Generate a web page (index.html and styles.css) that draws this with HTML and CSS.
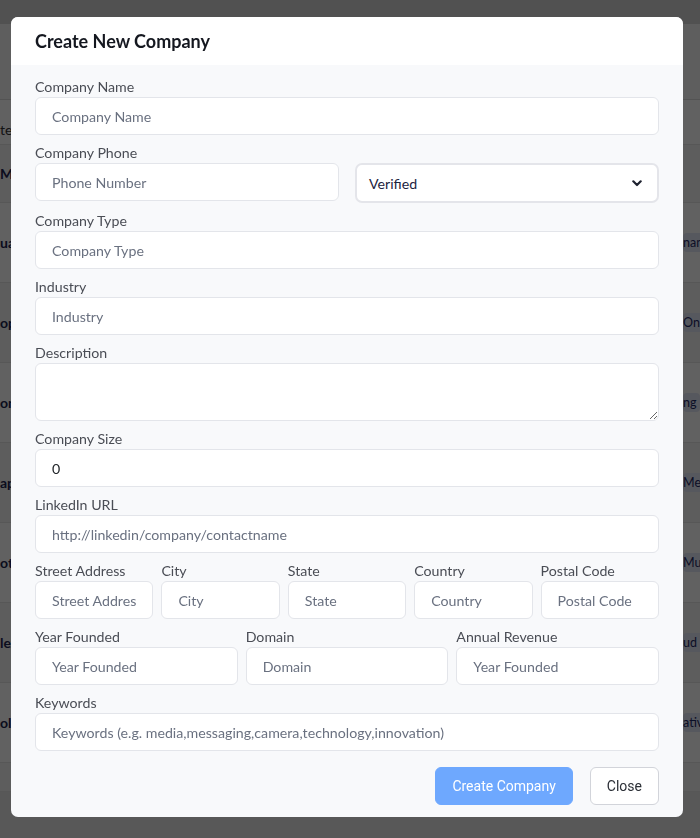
FILE: index.html
```html
<!DOCTYPE html>
<html lang="en">
<head>
<meta charset="utf-8">
<title>Create New Company</title>
<link rel="stylesheet" href="styles.css">
</head>
<body>
<div class="page">
  <div class="topbar"></div>
  <div class="toolbar"></div>
  <div class="table">
    <div class="trow thead1"><span class="lcell">tes</span><span class="rcell"></span></div>
    <div class="trow thead2"><span class="lcell strong">Main</span><span class="rcell"></span></div>
    <div class="trow"><span class="lcell strong">uantum</span><span class="rcell"><span class="badge">nance</span></span></div>
    <div class="trow"><span class="lcell strong">ops</span><span class="rcell"><span class="badge">Online</span></span></div>
    <div class="trow"><span class="lcell strong">onyx</span><span class="rcell"><span class="badge">ng</span></span></div>
    <div class="trow"><span class="lcell strong">apex</span><span class="rcell"><span class="badge">Media</span></span></div>
    <div class="trow"><span class="lcell strong">otify</span><span class="rcell"><span class="badge">Music</span></span></div>
    <div class="trow"><span class="lcell strong">lex</span><span class="rcell"><span class="badge">ud Computing</span></span></div>
    <div class="trow"><span class="lcell strong">olby</span><span class="rcell"><span class="badge">ative</span></span></div>
    <div class="trow tlast"></div>
  </div>
</div>

<div class="backdrop">
  <div class="modal">
    <div class="modal-header">
      <h2 class="modal-title">Create New Company</h2>
    </div>
    <form class="modal-body">
      <div class="field">
        <label class="label">Company Name</label>
        <input class="input" placeholder="Company Name">
      </div>
      <div class="row row-2">
        <div class="field">
          <label class="label">Company Phone</label>
          <input class="input" placeholder="Phone Number">
        </div>
        <div class="select-wrap">
          <div class="select">
            <span>Verified</span>
            <svg class="chev" width="10" height="7" viewBox="0 0 10 7"><path d="M1.3 1.3 L5 5 L8.7 1.3" fill="none" stroke="#1f2330" stroke-width="2.2" stroke-linecap="round" stroke-linejoin="round"/></svg>
          </div>
        </div>
      </div>
      <div class="field">
        <label class="label">Company Type</label>
        <input class="input" placeholder="Company Type">
      </div>
      <div class="field">
        <label class="label">Industry</label>
        <input class="input" placeholder="Industry">
      </div>
      <div class="field">
        <label class="label">Description</label>
        <textarea class="input textarea"></textarea>
      </div>
      <div class="field">
        <label class="label">Company Size</label>
        <input class="input value" value="0">
      </div>
      <div class="field">
        <label class="label">LinkedIn URL</label>
        <input class="input" placeholder="http://linkedin/company/contactname">
      </div>
      <div class="row row-5">
        <div class="field"><label class="label">Street Address</label><input class="input" placeholder="Street Address"></div>
        <div class="field"><label class="label">City</label><input class="input" placeholder="City"></div>
        <div class="field"><label class="label">State</label><input class="input" placeholder="State"></div>
        <div class="field"><label class="label">Country</label><input class="input" placeholder="Country"></div>
        <div class="field"><label class="label">Postal Code</label><input class="input" placeholder="Postal Code"></div>
      </div>
      <div class="row row-3">
        <div class="field"><label class="label">Year Founded</label><input class="input" placeholder="Year Founded"></div>
        <div class="field"><label class="label">Domain</label><input class="input" placeholder="Domain"></div>
        <div class="field"><label class="label">Annual Revenue</label><input class="input" placeholder="Year Founded"></div>
      </div>
      <div class="field">
        <label class="label">Keywords</label>
        <input class="input" placeholder="Keywords (e.g. media,messaging,camera,technology,innovation)">
      </div>
      <div class="footer">
        <button type="button" class="btn btn-primary">Create Company</button>
        <button type="button" class="btn btn-light">Close</button>
      </div>
    </form>
  </div>
</div>
</body>
</html>
```

FILE: styles.css
```css
* { box-sizing: border-box; }
html, body { margin: 0; padding: 0; }
body {
  width: 700px;
  height: 838px;
  overflow: hidden;
  font-family: Lato, "Open Sans", "Liberation Sans", sans-serif;
  background: #f3f4f6;
}

/* background page */
.page {
  width: 700px;
  height: 838px;
  background: #e6e6e6;
  overflow: hidden;
}
.topbar { height: 24px; background: #d6d6d6; }
.toolbar { height: 76px; background: #f6f6f6; border-bottom: 1px solid #d9d9d9; }
.table { background: #fff; }
.trow {
  height: 80px;
  display: grid;
  grid-template-columns: 1fr 17px;
  align-items: center;
  border-bottom: 1px solid #e4e4e4;
  font-size: 14px;
  color: #1d2450;
  overflow: hidden;
}
.trow:nth-child(even) { background: #f4f4f4; }
.thead1 { height: 45px; padding-top: 14px; color: #333; }
.thead2 { height: 58px; background: #fafafa; }
.tlast { height: 29px; }
.lcell { white-space: nowrap; }
.strong { font-weight: 700; }
.rcell { white-space: nowrap; }
.badge {
  display: inline-block;
  background: #e3e7f6;
  color: #1e2a66;
  font-size: 12.5px;
  padding: 2px 4px 2px 0;
  border-radius: 4px;
}

/* overlay */
.backdrop {
  position: fixed;
  inset: 0;
  background: rgba(0, 0, 0, 0.62);
}
.modal {
  position: absolute;
  left: 11px;
  top: 17px;
  width: 672px;
  height: 800px;
  background: #f8f9fb;
  border-radius: 7px;
  overflow: hidden;
}
.modal-header {
  height: 48px;
  background: #fff;
  padding: 0 24px;
  display: flex;
  align-items: center;
}
.modal-title {
  margin: 0;
  font-size: 18px;
  font-weight: 700;
  color: #14171f;
}
.modal-body {
  padding: 12px 24px 0 24px;
  display: flex;
  flex-direction: column;
  gap: 8px;
}
.field { display: flex; flex-direction: column; min-width: 0; }
.label {
  font-size: 14.2px;
  line-height: 20px;
  color: #4a4d55;
}
.input {
  height: 38px;
  width: 100%;
  border: 1px solid #e3e5ea;
  border-radius: 6px;
  background: #fff;
  padding: 0 16px;
  font-family: Lato, "Open Sans", "Liberation Sans", sans-serif;
  font-size: 14.2px;
  color: #212529;
  outline: none;
}
.input::placeholder { color: #6a7180; opacity: 1; }
.textarea { height: 58px; padding-top: 8px; resize: vertical; display: block; }

.row { display: grid; gap: 8px; }
.row-2 { grid-template-columns: 1fr 1fr; column-gap: 16px; }
.row-5 { grid-template-columns: repeat(5, 1fr); }
.row-3 { grid-template-columns: repeat(3, 1fr); }
.select-wrap { padding-top: 20px; }
.select {
  height: 40px;
  border: 2px solid #e4e5ea;
  border-radius: 7px;
  background: #fff;
  display: flex;
  align-items: center;
  justify-content: space-between;
  padding: 0 15px 0 12px;
  font-size: 14.2px;
  color: #1c2340;
}
.chev { display: block; }

.footer {
  display: flex;
  justify-content: flex-end;
  gap: 17px;
  margin-top: 8px;
}
.btn {
  height: 38px;
  border-radius: 6px;
  font-family: Roboto, "Liberation Sans", sans-serif;
  font-size: 14px;
  padding: 0 16px;
  cursor: pointer;
}
.btn-primary {
  background: #6ea8fe;
  border: 1px solid #6ea8fe;
  color: #fff;
}
.btn-light {
  background: #fff;
  border: 1px solid #d2d4da;
  color: #2b2f36;
}
```
